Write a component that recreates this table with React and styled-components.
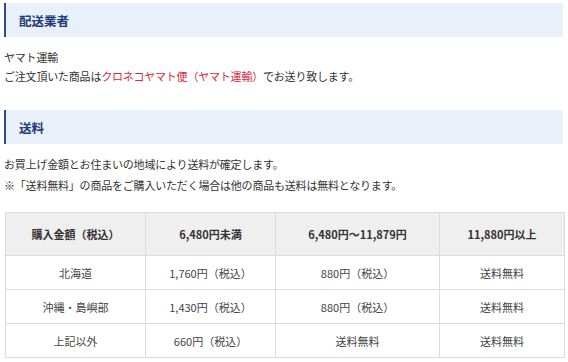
import React from 'react';
import styled, { createGlobalStyle } from 'styled-components';

const GlobalStyle = createGlobalStyle`
  html, body {
    margin: 0;
    padding: 0;
    background: #ffffff;
  }
  body {
    font-family: "Noto Sans CJK JP", "Noto Sans", sans-serif;
    color: #333333;
  }
`;

const Page = styled.div`
  width: 559px;
  padding: 3px 5px 0 4px;
`;

const Heading = styled.h2`
  margin: 0;
  height: 34px;
  display: flex;
  align-items: center;
  padding-left: 13px;
  background: #e9f0fa;
  border-left: 2px solid #2d4c8c;
  color: #1e3a78;
  font-size: 12.5px;
  font-weight: 700;
`;

const Section = styled.section`
  margin-bottom: ${({ $gap }) => $gap}px;
`;

const Body = styled.div`
  margin-top: ${({ $top }) => $top}px;
  font-size: 11px;
  line-height: ${({ $lh }) => $lh}px;
  letter-spacing: -0.2px;
`;

const Line = styled.p`
  margin: 0;
`;

const Red = styled.span`
  color: #d8283c;
`;

const Table = styled.table`
  margin-top: 16px;
  margin-left: 1px;
  width: 559px;
  border-collapse: collapse;
  table-layout: fixed;
  font-size: 11px;
`;

const Th = styled.th`
  height: 42px;
  padding: 0;
  background: #efefef;
  border: 1px solid #dcdcdc;
  font-weight: 700;
  color: #333;
  text-align: center;
`;

const Td = styled.td`
  height: 33px;
  padding: 0;
  border: 1px solid #dcdcdc;
  text-align: center;
  color: #444;
`;

const rows = [
  ['北海道', '1,760円（税込）', '880円（税込）', '送料無料'],
  ['沖縄・島嶼部', '1,430円（税込）', '880円（税込）', '送料無料'],
  ['上記以外', '660円（税込）', '送料無料', '送料無料'],
];

export default function App() {
  return (
    <Page>
      <GlobalStyle />
      <Section $gap={24}>
        <Heading>配送業者</Heading>
        <Body $top={11} $lh={19}>
          <Line>ヤマト運輸</Line>
          <Line>
            ご注文頂いた商品は<Red>クロネコヤマト便（ヤマト運輸）</Red>でお送り致します。
          </Line>
        </Body>
      </Section>
      <Section $gap={0}>
        <Heading>送料</Heading>
        <Body $top={10} $lh={21}>
          <Line>お買上げ金額とお住まいの地域により送料が確定します。</Line>
          <Line>※「送料無料」の商品をご購入いただく場合は他の商品も送料は無料となります。</Line>
        </Body>
        <Table>
          <colgroup>
            <col style={{ width: 140 }} />
            <col style={{ width: 130 }} />
            <col style={{ width: 164 }} />
            <col style={{ width: 125 }} />
          </colgroup>
          <thead>
            <tr>
              <Th>購入金額（税込）</Th>
              <Th>6,480円未満</Th>
              <Th>6,480円～11,879円</Th>
              <Th>11,880円以上</Th>
            </tr>
          </thead>
          <tbody>
            {rows.map((r) => (
              <tr key={r[0]}>
                {r.map((c, i) => (
                  <Td key={i}>{c}</Td>
                ))}
              </tr>
            ))}
          </tbody>
        </Table>
      </Section>
    </Page>
  );
}
